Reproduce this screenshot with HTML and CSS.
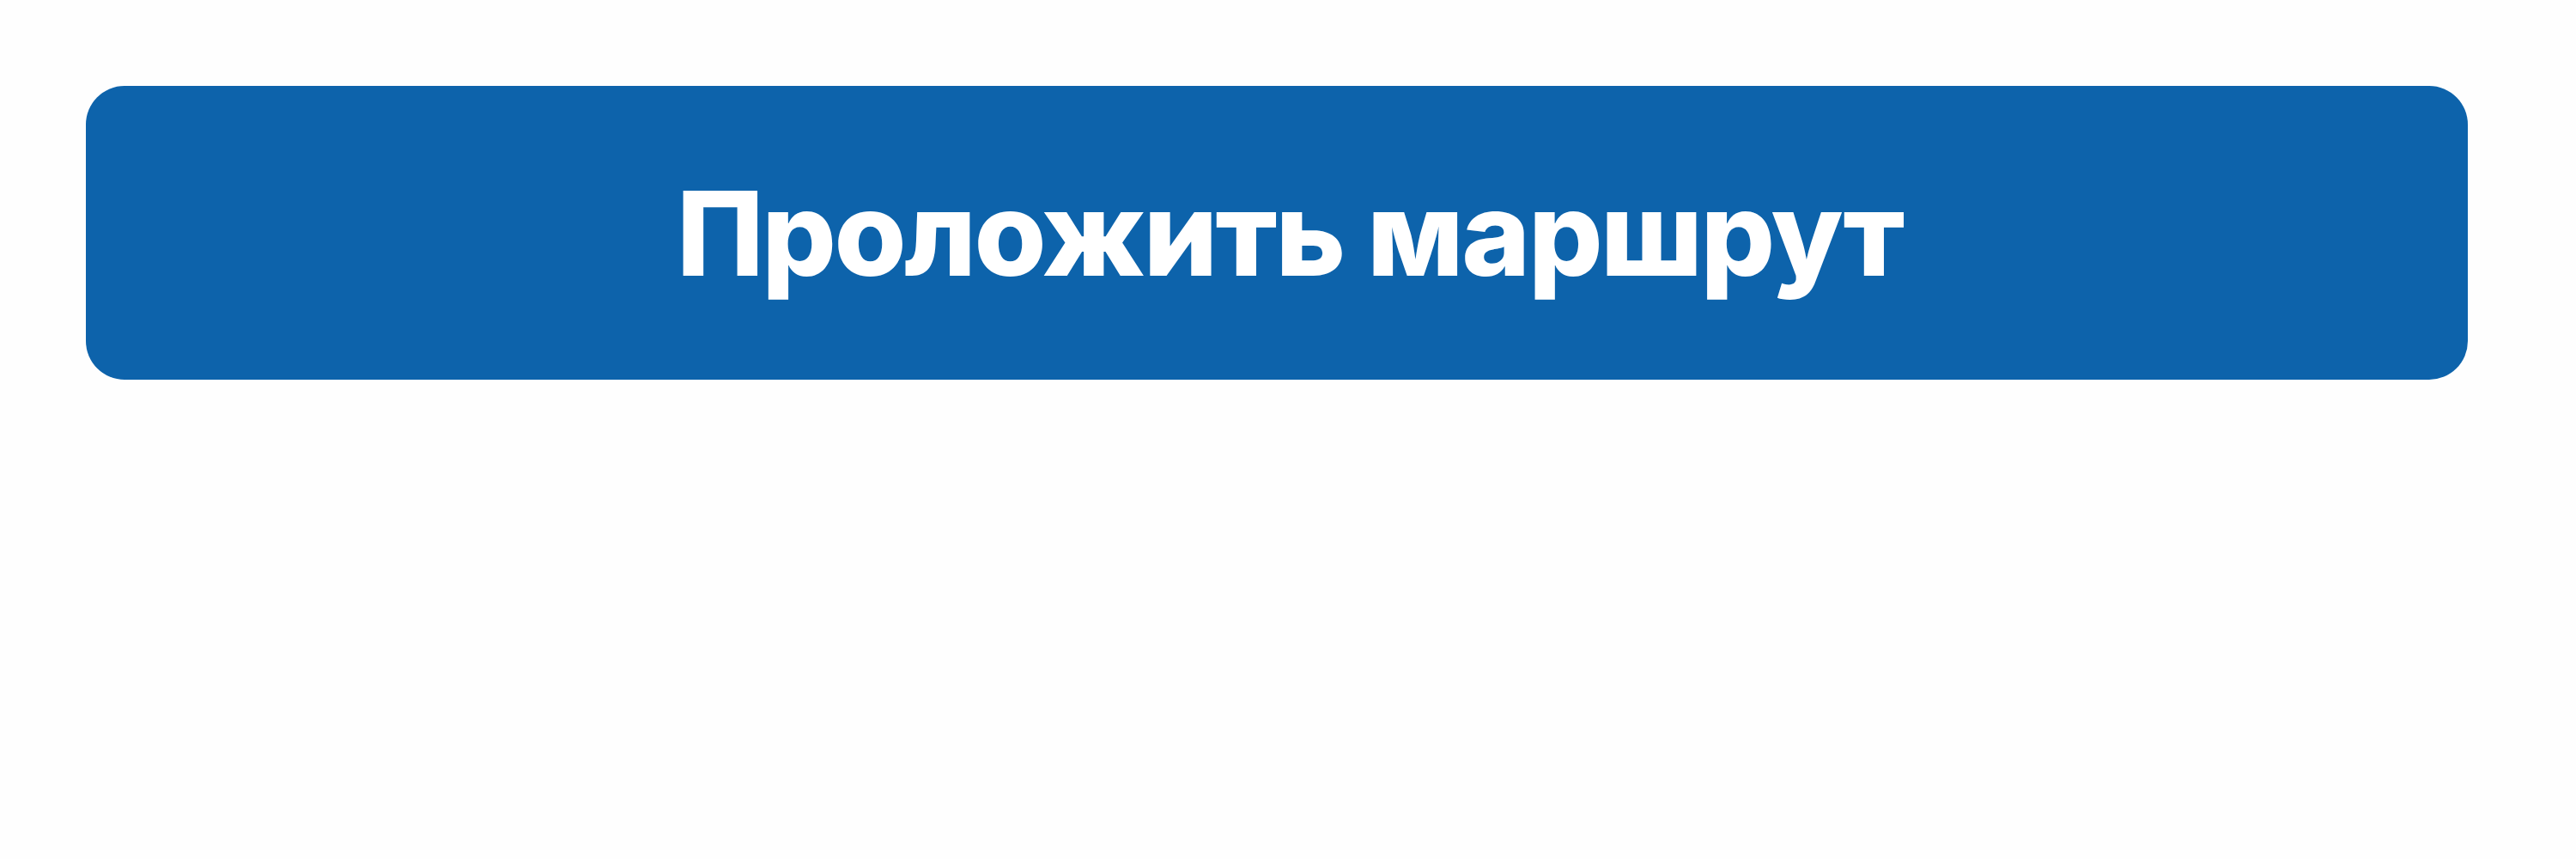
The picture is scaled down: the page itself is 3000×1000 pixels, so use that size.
FILE: index.html
```html
<!DOCTYPE html>
<html lang="ru">
<head>
    <meta charset="UTF-8">
    <meta name="viewport" content="width=device-width, initial-scale=1.0">
    <title>Маршрут</title>
    <link rel="stylesheet" href="styles.css">
</head>
<body>

    <div class="page">
        <!-- Main action -->
        <button class="route-btn">Проложить маршрут</button>
    </div>

</body>
</html>
```

FILE: styles.css
```css
body {
    margin: 0;
    background-color: #fefefe;
    font-family: "Inter", "Open Sans", sans-serif;
}
.page {
    padding: 100px 126px 100px 100px;
}
.route-btn {
    display: flex;
    align-items: center;
    justify-content: center;
    width: 100%;
    height: 342px;
    padding: 0 0 0 30px;
    border: none;
    border-radius: 45px;
    background-color: #0d63ab;
    color: #ffffff;
    font-family: inherit;
    font-size: 136px;
    font-weight: 800;
    letter-spacing: -2.5px;
    cursor: pointer;
}
```
